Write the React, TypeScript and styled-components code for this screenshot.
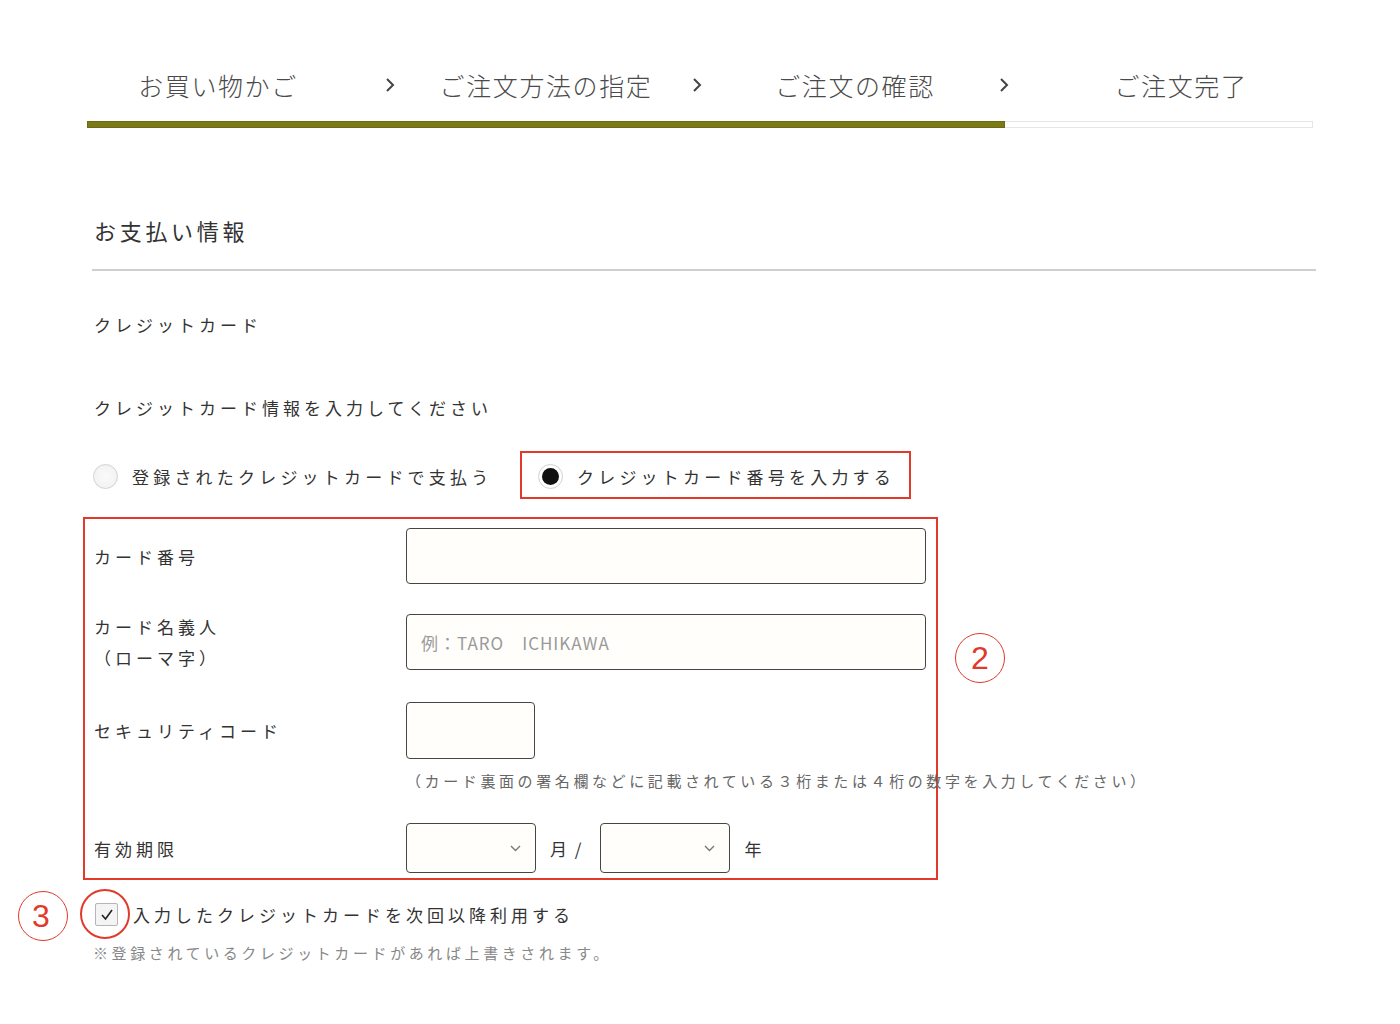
import React from "react";
import styled, { createGlobalStyle } from "styled-components";

const RED = "#e2392a";

const GlobalStyle = createGlobalStyle`
  html, body { margin: 0; padding: 0; background: #fff; }
  body {
    font-family: "Noto Sans CJK JP", "Noto Sans", "Liberation Sans", sans-serif;
    color: #333;
  }
  * { box-sizing: border-box; }
`;

const Page = styled.div`
  width: 1400px;
  min-height: 1024px;
  background: #fff;
  overflow: hidden;
`;

const Stepper = styled.nav`
  margin-left: 87px;
  width: 1226px;
  padding-top: 62px;
`;

const StepRow = styled.div`
  display: flex;
  align-items: center;
  height: 46px;
`;

const Step = styled.div<{ $w: number; $pl?: number; $pr?: number }>`
  flex: none;
  width: ${(p) => p.$w}px;
  text-align: center;
  font-size: 25px;
  line-height: 46px;
  letter-spacing: 1.6px;
  color: #4a4a4a;
  font-weight: 300;
  white-space: nowrap;
  padding-left: ${(p) => p.$pl || 0}px;
  padding-right: ${(p) => p.$pr || 0}px;
`;

const Chevron = styled.span`
  flex: none;
  width: 20px;
  display: flex;
  justify-content: center;
  align-items: center;
`;

const Track = styled.div`
  margin-top: 13px;
  height: 7px;
  display: flex;
  background: #fff;
  box-shadow: inset 0 0 0 1px #e6e6e6;
`;

const Fill = styled.div`
  height: 100%;
  background: #7b7a18;
  box-shadow: inset 0 0 0 1px #6c6b12;
`;

const Section = styled.section`
  margin-left: 92px;
  width: 1224px;
`;

const SectionTitle = styled.h2`
  margin: 82px 0 0;
  font-size: 22px;
  font-weight: 400;
  line-height: 40px;
  letter-spacing: 3.7px;
  color: #333;
  padding: 0 0 19px 2px;
  border-bottom: 2px solid #cfcfcf;
`;

const Text = styled.p<{ $mt: number }>`
  margin: ${(p) => p.$mt}px 0 0 2px;
  font-size: 17px;
  line-height: 30px;
  letter-spacing: 4px;
  color: #333;
`;

const RadioRow = styled.div`
  margin-top: 28px;
  display: flex;
  align-items: center;
  height: 48px;
`;

const RadioOption = styled.label<{ $highlight?: boolean; $width: number }>`
  display: flex;
  align-items: center;
  gap: 14px;
  height: 48px;
  width: ${(p) => p.$width}px;
  padding-left: ${(p) => (p.$highlight ? 16 : 1)}px;
  padding-top: 2px;
  border: ${(p) => (p.$highlight ? `2px solid ${RED}` : "none")};
  font-size: 17px;
  letter-spacing: 4.2px;
  color: #333;
  white-space: nowrap;
`;

const RadioDot = styled.span<{ $checked?: boolean }>`
  width: 25px;
  height: 25px;
  border-radius: 50%;
  flex: none;
  display: flex;
  align-items: center;
  justify-content: center;
  border: 1px solid #d2d2d2;
  background: ${(p) => (p.$checked ? "#fff" : "radial-gradient(circle, #fafafa 0%, #f0f0f0 100%)")};
  &::after {
    content: "";
    display: ${(p) => (p.$checked ? "block" : "none")};
    width: 17px;
    height: 17px;
    border-radius: 50%;
    background: #111;
  }
`;

const CardBox = styled.div`
  position: relative;
  margin-top: 18px;
  margin-left: -9px;
  width: 855px;
  border: 2px solid ${RED};
  padding: 9px 10px 5px 9px;
`;

const FieldRow = styled.div<{ $mt?: number; $align?: string }>`
  display: grid;
  grid-template-columns: 312px 1fr;
  align-items: ${(p) => p.$align || "center"};
  margin-top: ${(p) => p.$mt || 0}px;
`;

const Label = styled.div<{ $mt?: number; $lh?: number }>`
  font-size: 17px;
  letter-spacing: 4px;
  line-height: ${(p) => p.$lh || 31}px;
  margin-top: ${(p) => p.$mt || 0}px;
  color: #333;
  white-space: nowrap;
`;

const Input = styled.input<{ $w: number; $h: number }>`
  display: block;
  width: ${(p) => p.$w}px;
  height: ${(p) => p.$h}px;
  border: 1.5px solid #454545;
  border-radius: 4px;
  background: #fffefb;
  padding: 0 14px;
  font-family: "Noto Sans CJK JP", "Noto Sans", sans-serif;
  font-size: 17px;
  letter-spacing: 1px;
  color: #333;
  outline: none;
  &::placeholder { color: #9a9a9a; }
`;

const FieldCol = styled.div`
  display: flex;
  flex-direction: column;
`;

const Hint = styled.div`
  margin-top: 10px;
  font-size: 15px;
  line-height: 24px;
  letter-spacing: 3.6px;
  color: #666;
  white-space: nowrap;
`;

const DateRow = styled.div`
  display: flex;
  align-items: center;
`;

const SelectBox = styled.div`
  width: 130px;
  height: 50px;
  border: 1.5px solid #454545;
  border-radius: 4px;
  background: #fffefb;
  display: flex;
  align-items: center;
  justify-content: flex-end;
  padding-right: 14px;
`;

const Unit = styled.span<{ $mr: number }>`
  margin: 0 ${(p) => p.$mr}px 0 14px;
  font-size: 17px;
  letter-spacing: 2px;
  color: #333;
  white-space: nowrap;
`;

const Badge = styled.div<{ $left: number; $top: number }>`
  position: absolute;
  left: ${(p) => p.$left}px;
  top: ${(p) => p.$top}px;
  width: 50px;
  height: 50px;
  border-radius: 50%;
  border: 1.5px solid ${RED};
  display: flex;
  align-items: center;
  justify-content: center;
  color: ${RED};
  font-family: "Liberation Sans", Arial, sans-serif;
  font-size: 32px;
  line-height: 1;
`;

const CheckRow = styled.label`
  position: relative;
  margin-top: 20px;
  display: flex;
  align-items: center;
  height: 28px;
  gap: 15px;
  padding-left: 3px;
  font-size: 17px;
  letter-spacing: 4px;
  color: #333;
  white-space: nowrap;
`;

const CheckBox = styled.span`
  width: 23px;
  height: 23px;
  flex: none;
  border: 1px solid #b5b5b5;
  border-radius: 2px;
  background: #f4f4f4;
  display: flex;
  align-items: center;
  justify-content: center;
`;

const Ring = styled.span<{ $left: number; $top: number }>`
  position: absolute;
  left: ${(p) => p.$left}px;
  top: ${(p) => p.$top}px;
  width: 50px;
  height: 50px;
  border-radius: 50%;
  border: 2px solid ${RED};
`;

const SmallNote = styled.p`
  margin: 13px 0 0 1px;
  font-size: 15px;
  line-height: 24px;
  letter-spacing: 3.6px;
  color: #888;
`;

const ChevronRight = () => (
  <svg width="10" height="16" viewBox="0 0 10 16">
    <polyline points="2,2 8,8 2,14" fill="none" stroke="#444" strokeWidth="2" />
  </svg>
);

const ChevronDown = () => (
  <svg width="11" height="7" viewBox="0 0 11 7">
    <polyline points="1,1 5.5,5.5 10,1" fill="none" stroke="#777" strokeWidth="1.4" />
  </svg>
);

const CheckMark = () => (
  <svg width="14" height="13" viewBox="0 0 14 13">
    <polyline points="2,7 5.5,11 12,2" fill="none" stroke="#222" strokeWidth="1.6" />
  </svg>
);

export default function App() {
  return (
    <Page>
      <GlobalStyle />
      <Stepper>
        <StepRow>
          <Step $w={293} $pr={31}>お買い物かご</Step>
          <Chevron><ChevronRight /></Chevron>
          <Step $w={287} $pl={5}>ご注文方法の指定</Step>
          <Chevron><ChevronRight /></Chevron>
          <Step $w={287} $pl={9}>ご注文の確認</Step>
          <Chevron><ChevronRight /></Chevron>
          <Step $w={299} $pl={35}>ご注文完了</Step>
        </StepRow>
        <Track>
          <Fill style={{ width: "74.9%" }} />
        </Track>
      </Stepper>

      <Section>
        <SectionTitle>お支払い情報</SectionTitle>
        <Text $mt={39}>クレジットカード</Text>
        <Text $mt={53}>クレジットカード情報を入力してください</Text>

        <RadioRow>
          <RadioOption $width={428}>
            <RadioDot />
            登録されたクレジットカードで支払う
          </RadioOption>
          <RadioOption $width={391} $highlight>
            <RadioDot $checked />
            クレジットカード番号を入力する
          </RadioOption>
        </RadioRow>

        <CardBox>
          <FieldRow>
            <Label>カード番号</Label>
            <Input $w={520} $h={56} />
          </FieldRow>
          <FieldRow $mt={30} $align="start">
            <Label $mt={-3}>
              カード名義人
              <br />
              （ローマ字）
            </Label>
            <Input $w={520} $h={56} placeholder="例：TARO　ICHIKAWA" />
          </FieldRow>
          <FieldRow $mt={29} $align="start">
            <Label $lh={57}>セキュリティコード</Label>
            <FieldCol>
              <Input $w={129} $h={57} />
              <Hint>（カード裏面の署名欄などに記載されている３桁または４桁の数字を入力してください）</Hint>
            </FieldCol>
          </FieldRow>
          <FieldRow $mt={30}>
            <Label>有効期限</Label>
            <DateRow>
              <SelectBox><ChevronDown /></SelectBox>
              <Unit $mr={17}>月 /</Unit>
              <SelectBox><ChevronDown /></SelectBox>
              <Unit $mr={0}>年</Unit>
            </DateRow>
          </FieldRow>
          <Badge $left={870} $top={114}>2</Badge>
        </CardBox>

        <CheckRow>
          <CheckBox><CheckMark /></CheckBox>
          入力したクレジットカードを次回以降利用する
          <Ring $left={-12} $top={-11} />
          <Badge $left={-74} $top={-9}>3</Badge>
        </CheckRow>
        <SmallNote>※登録されているクレジットカードがあれば上書きされます。</SmallNote>
      </Section>
    </Page>
  );
}
